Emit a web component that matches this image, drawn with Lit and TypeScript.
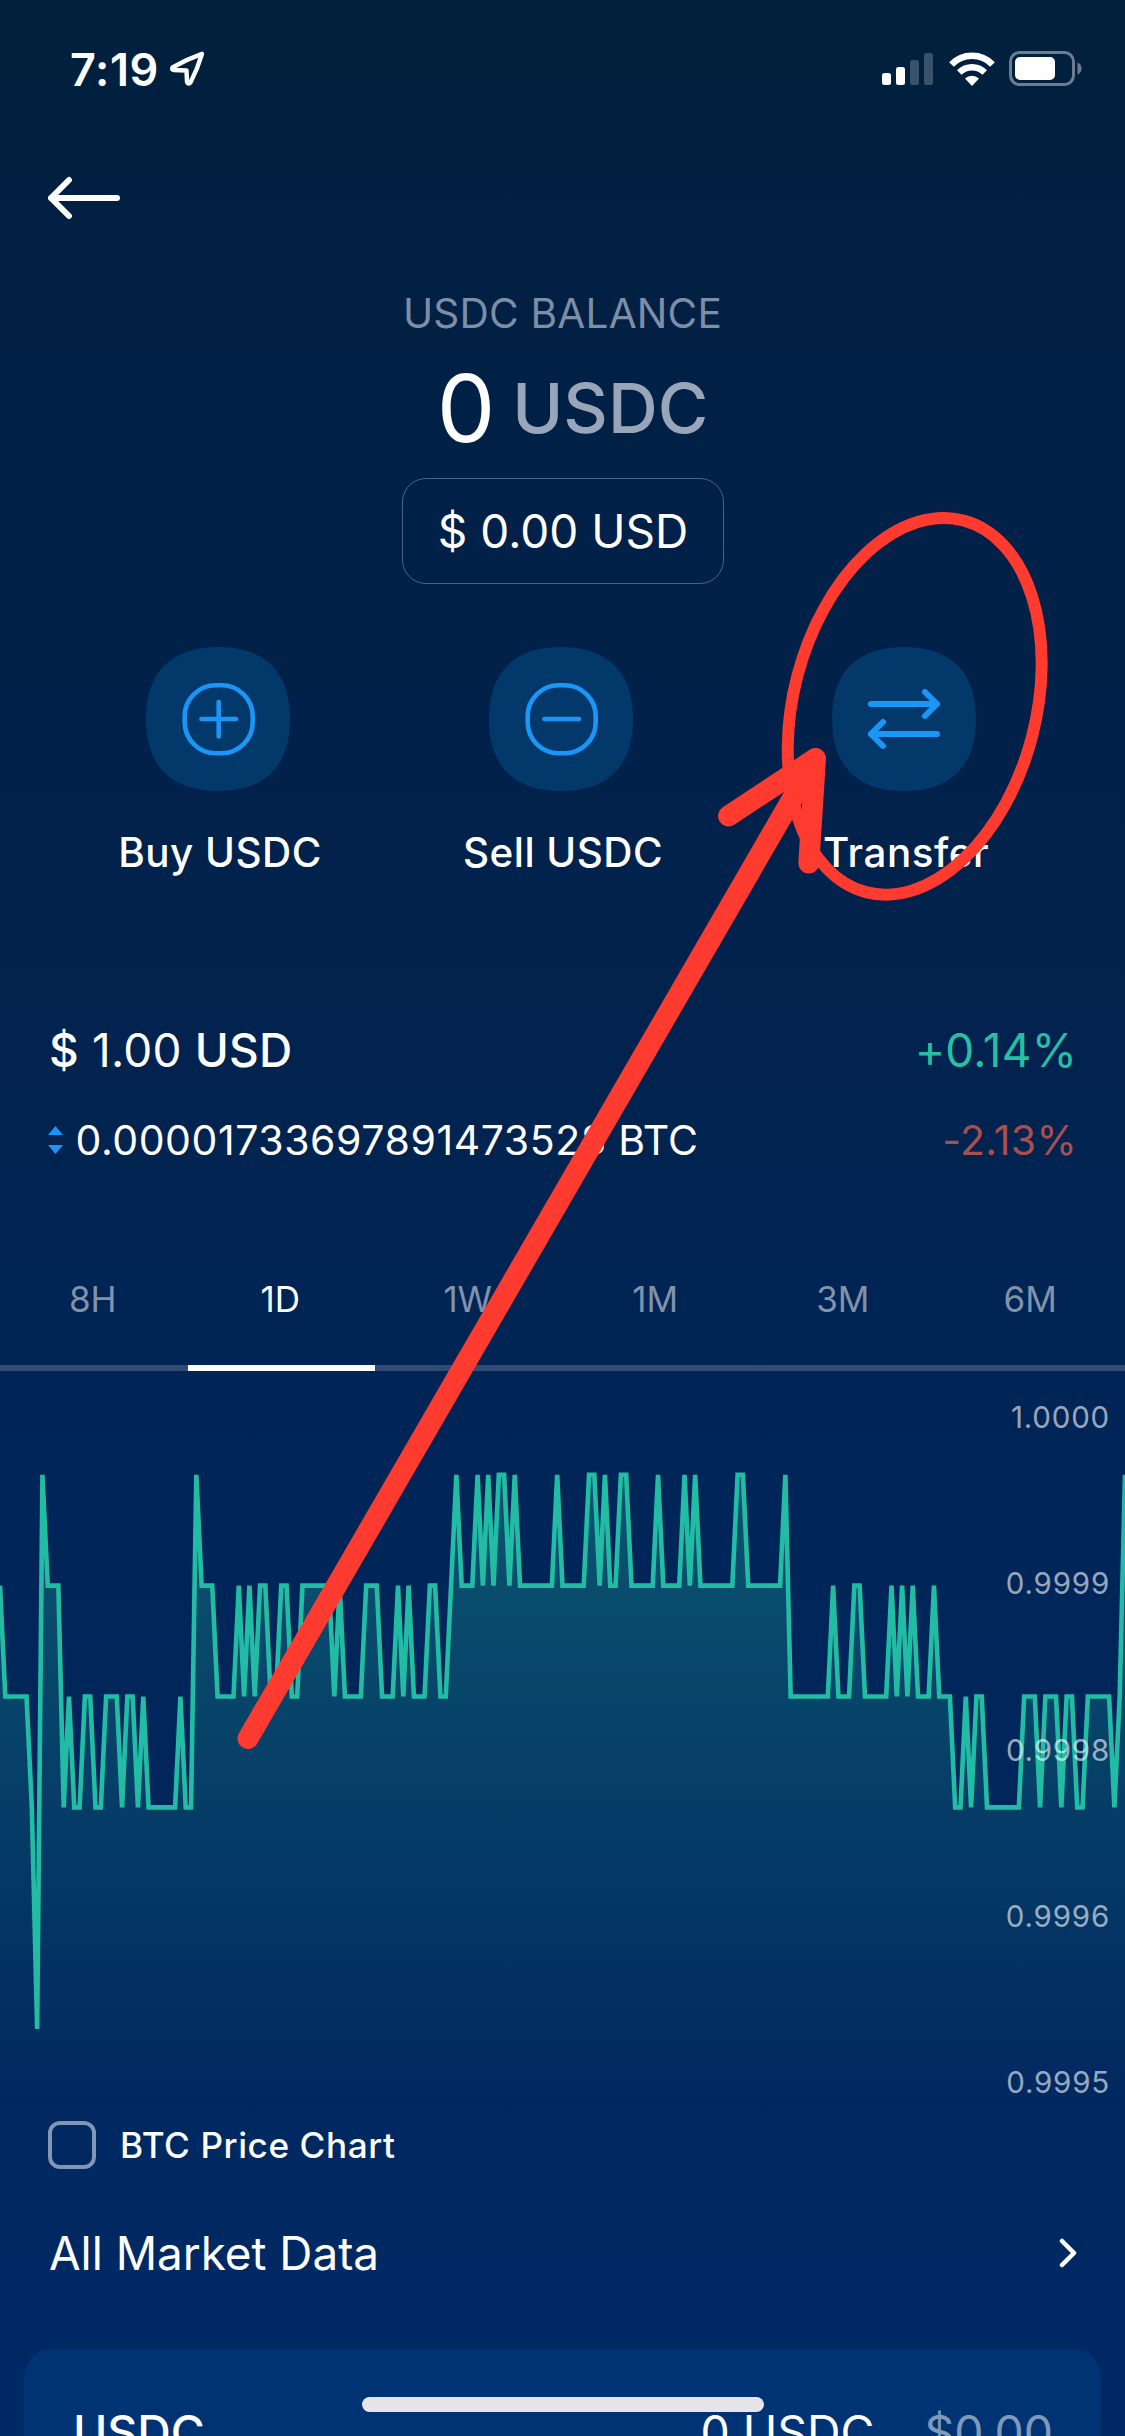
import { LitElement, html, svg, css } from "lit";
import { customElement } from "lit/decorators.js";

const WIDTH = 1125;

// Runs of [level, sample count]; one level is one price tick.
const RUNS: Array<[number, number]> = [
  [3, 1], [2, 5], [1, 1], [-1, 1], [4, 1], [3, 3], [1, 1], [2, 1], [1, 2], [2, 2], [1, 2], [2, 3], [1, 1],
  [2, 2], [1, 1], [2, 1], [1, 6], [2, 1], [1, 2], [4, 1], [3, 3], [2, 4], [3, 1], [2, 1], [3, 1], [2, 1],
  [3, 2], [2, 2], [3, 2], [2, 2], [3, 6], [2, 1], [3, 1], [2, 4], [3, 3], [2, 3], [3, 1], [2, 1], [3, 1],
  [2, 3], [3, 2], [2, 2], [3, 1], [4, 1], [3, 3], [4, 1], [3, 1], [4, 1], [3, 1], [4, 2], [3, 1], [4, 1],
  [3, 7], [4, 1], [3, 5], [4, 2], [3, 1], [4, 1], [3, 2], [4, 2], [3, 5], [4, 1], [3, 4], [4, 1], [3, 1],
  [4, 1], [3, 7], [4, 2], [3, 7], [4, 1], [2, 8], [3, 1], [2, 3], [3, 2], [2, 5], [3, 1], [2, 1], [3, 1],
  [2, 1], [3, 1], [2, 3], [3, 1], [2, 3], [1, 2], [2, 1], [1, 1], [2, 2], [1, 7], [2, 3], [1, 1], [2, 3],
  [1, 1], [2, 2], [1, 2], [2, 5], [1, 1], [2, 1], [4, 1],
];
const LEVELS = RUNS.flatMap(([level, count]) => Array<number>(count).fill(level));
const STEP = WIDTH / (LEVELS.length - 1);
const CHART_HEIGHT = 750;
const LINE = LEVELS.map((l, i) => `${(i * STEP).toFixed(2)},${(103.8 + (4 - l) * 110.85).toFixed(2)}`).join(" ");

@customElement("price-chart")
export class PriceChart extends LitElement {
  static styles = css`
    :host { display: block; position: relative; height: 750px; }
    .plot { display: block; }
    .axis { position: absolute; top: 21px; right: 15px; text-align: right; font-size: 29.5px; line-height: 50px; letter-spacing: 0.8px; color: rgba(255, 255, 255, 0.6); }
    .tick { height: 166.3px; }
  `;
  render() {
    return html`
      <svg class="plot" width=${WIDTH} height=${CHART_HEIGHT} viewBox="0 0 1125 750">
        <defs>
          <linearGradient id="area" gradientUnits="userSpaceOnUse" x1="0" y1="100" x2="0" y2="730">
            <stop offset="0" stop-color="#22bca4" stop-opacity=".32" />
            <stop offset="1" stop-color="#22bca4" stop-opacity="0" />
          </linearGradient>
        </defs>
        <polygon points="0,730 ${LINE} 1125,730" fill="url(#area)" />
        <polyline points=${LINE} fill="none" stroke="#22bca4" stroke-width="4.6" />
      </svg>
      <div class="axis">
        ${["1.0000", "0.9999", "0.9998", "0.9996", "0.9995"].map((t) => html`<div class="tick">${t}</div>`)}
      </div>
    `;
  }
}

const ICONS = {
  plus: svg`<rect x="38.700" y="38.200" width="68" height="68" rx="31" /><path d="M55.500 72H90M72.700 55V89.500" />`,
  minus: svg`<rect x="38.700" y="38.200" width="68" height="68" rx="31" /><path d="M55.500 72H90" />`,
  transfer: svg`<g stroke-width="6"><path d="M39 57H105M93 45L105 57L93 69M105 87H39M51 75L39 87L51 99" /></g>`,
};

@customElement("round-action")
export class RoundAction extends LitElement {
  static properties = { icon: {}, label: {} };
  declare icon: keyof typeof ICONS;
  declare label: string;
  static styles = css`
    :host { display: flex; flex-direction: column; align-items: center; gap: 37px; }
    .glyph { display: block; }
    .label { padding-left: 4px; font-size: 40.4px; font-weight: 500; line-height: 50px; letter-spacing: 0.5px; white-space: nowrap; }
  `;
  render() {
    return html`
      <svg class="glyph" width="144" height="144" viewBox="0 0 144 144" fill="none" stroke="#1a96f7" stroke-width="4.6" stroke-linecap="round" stroke-linejoin="round">
        <path stroke="none" fill="#03386a" d="M72 0C120 0 144 26 144 72S120 144 72 144S0 118 0 72S24 0 72 0Z" />
        ${ICONS[this.icon]}
      </svg>
      <span class="label">${this.label}</span>
    `;
  }
}

@customElement("app-root")
export class AppRoot extends LitElement {
  static styles = css`
    :host {
      display: block; position: relative; width: 1125px; height: 2436px; overflow: hidden; color: #fff;
      font-family: Inter, "Liberation Sans", sans-serif;
      background: linear-gradient(#01203d 0, #012046 400px, #01234f 1100px, #002558 1500px, #002962 2200px, #002a66 2436px);
    }
    svg { display: block; }
    .row { display: flex; align-items: center; justify-content: space-between; white-space: nowrap; }
    .status { height: 138px; padding: 0 43px 0 70px; }
    .time { display: flex; align-items: center; gap: 10px; font-size: 45px; font-weight: 600; letter-spacing: 0.6px; }
    .signals { display: flex; align-items: center; gap: 14.5px; }
    .nav { display: flex; align-items: center; height: 120px; padding-left: 48px; }
    .balance { display: flex; flex-direction: column; align-items: center; padding-top: 31px; white-space: nowrap; }
    .caption { font-size: 40.6px; line-height: 50px; letter-spacing: 0.2px; color: #7d8ea6; }
    .amount { display: flex; align-items: center; gap: 17px; height: 110px; margin-top: 14px; margin-left: 20px; }
    .number { font-size: 93px; }
    .unit { font-size: 69px; font-weight: 500; color: #99a6b9; }
    .fiat { box-sizing: border-box; width: 322px; height: 106px; margin-top: 15px; border: 1px solid #4a647e; border-radius: 24px; text-align: center; text-indent: 1px; font-size: 46px; line-height: 105px; }
    .actions { display: grid; grid-template-columns: repeat(3, 343px); margin: 63px 0 0 46.5px; }
    .price { height: 60px; margin-top: 142px; padding: 0 48px 0 49px; font-size: 46px; letter-spacing: 0.2px; }
    .strong { font-weight: 500; }
    .up { color: #26bfa3; }
    .rate { height: 50px; margin-top: 35px; padding: 0 48px; font-size: 41px; }
    .swap { display: flex; align-items: center; gap: 12.5px; }
    .digits { letter-spacing: 0.57px; }
    .down { letter-spacing: 0.3px; color: #a94f4e; }
    .tabs { display: grid; grid-template-columns: repeat(6, 1fr); margin-top: 69px; }
    .tab { box-sizing: border-box; height: 137px; padding-right: 2px; line-height: 131px; border-bottom: 6px solid #304c75; text-align: center; font-size: 35px; color: #8192ab; }
    .tab.active { color: #fff; border-color: #fff; }
    .option { height: 48px; justify-content: flex-start; gap: 24px; padding-left: 48px; font-size: 35.2px; font-weight: 500; letter-spacing: 0.55px; }
    .box { box-sizing: border-box; width: 48px; height: 48px; border: 4px solid #8195b5; border-radius: 12px; }
    .market { height: 60px; margin-top: 54px; padding: 0 48px 0 49px; font-size: 45.8px; }
    .card { box-sizing: border-box; height: 160px; margin: 66px 24px 0; padding: 53px 48px 0 49px; border-radius: 28px; background: #003373; font-size: 46.4px; line-height: 60px; align-items: flex-start; }
    .holdings { display: flex; gap: 50px; }
    .dim { color: #7f99bb; }
    .home { position: absolute; left: 362px; top: 2397px; width: 402px; height: 15px; border-radius: 8px; background: #e5e4e6; }
    .marks { position: absolute; left: 0; top: 0; }
  `;
  render() {
    return html`
      <div class="row status">
        <div class="time">
          <span class="clock">7:19</span>
          <svg width="36" height="36" viewBox="0 0 36 36" fill="none" stroke="#fff" stroke-width="4.4" stroke-linejoin="round"><path d="M33 2.800Q18 8 3.500 16.500Q2 18.500 5 19L17.500 19.500L18 31Q19.500 34 21.500 31.500Q28.500 18 33 2.800Z" /></svg>
        </div>
        <div class="signals">
          <svg width="52" height="34" viewBox="0 0 52 34" fill="#fff">
            <rect y="21" width="9" height="12" rx="2.500" /><rect x="14" y="15" width="9" height="18" rx="2.500" />
            <g opacity=".22"><rect x="28" y="8" width="9" height="25" rx="2.500" /><rect x="42" y="1" width="9" height="32" rx="2.500" /></g>
          </svg>
          <svg width="46" height="34" viewBox="0 0 46 34" fill="none" stroke="#fff" stroke-width="6.500">
            <path d="M2.500 12.500A28.500 28.500 0 0 1 43.500 12.500" /><path d="M10.300 20.500A18 18 0 0 1 35.700 20.500" />
            <path stroke="none" fill="#fff" d="M23 34L16 26.500A10 10 0 0 1 30 26.500Z" />
          </svg>
          <svg width="73" height="36" viewBox="0 0 73 36">
            <rect x="1.500" y="1.500" width="63" height="32" rx="9" fill="none" stroke="#6b7c93" stroke-width="3" />
            <rect x="6" y="6" width="40" height="23" rx="5" fill="#fff" /><path d="M68.500 11.500Q72.500 13 72.500 17.500T68.500 23.500Z" fill="#6b7c93" />
          </svg>
        </div>
      </div>
      <div class="nav">
        <svg width="72" height="44" viewBox="0 0 72 44" fill="none" stroke="#fff" stroke-width="6" stroke-linecap="round" stroke-linejoin="round"><path d="M69 22H3M21 4L3 22L21 40" /></svg>
      </div>
      <div class="balance">
        <span class="caption">USDC BALANCE</span>
        <div class="amount"><span class="number">0</span><span class="unit">USDC</span></div>
        <div class="fiat">$ 0.00 USD</div>
      </div>
      <div class="actions">
        <round-action icon="plus" label="Buy USDC"></round-action>
        <round-action icon="minus" label="Sell USDC"></round-action>
        <round-action icon="transfer" label="Transfer"></round-action>
      </div>
      <div class="row price">
        <span class="usd"><span class="strong">$</span> 1.00 <span class="strong">USD</span></span><span class="up">+0.14%</span>
      </div>
      <div class="row rate">
        <div class="swap">
          <svg width="15" height="28" viewBox="0 0 15 28" fill="#1a96f7"><path d="M7.500 0L15 9H0ZM7.500 28L15 19H0Z" /></svg>
          <span class="btc"><span class="digits">0.00001733697891473528</span> BTC</span>
        </div>
        <span class="down">-2.13%</span>
      </div>
      <div class="tabs">
        ${["8H", "1D", "1W", "1M", "3M", "6M"].map((t) => html`<div class="tab ${t === "1D" ? "active" : ""}">${t}</div>`)}
      </div>
      <price-chart></price-chart>
      <div class="row option"><span class="box"></span><span class="optlabel">BTC Price Chart</span></div>
      <div class="row market">
        <span class="all">All Market Data</span>
        <svg width="18" height="30" viewBox="0 0 18 30" fill="none" stroke="#fff" stroke-width="4.500" stroke-linecap="round" stroke-linejoin="round"><path d="M3 3L15 15L3 27" /></svg>
      </div>
      <div class="row card">
        <span class="strong">USDC</span>
        <div class="holdings"><span class="qty">0 USDC</span><span class="dim">$0.00</span></div>
      </div>
      <div class="home"></div>
      <svg class="marks" width="1125" height="2436" viewBox="0 0 1125 2436" fill="none" stroke="#ff3b2f" stroke-linecap="round" stroke-linejoin="round">
        <ellipse cx="914.700" cy="706.300" rx="121.200" ry="192.100" transform="rotate(14.700 914.700 706.300)" stroke-width="12" />
        <path d="M248 1738.500L815.500 758.500M728.500 816L815.500 758.500L808.800 863" stroke-width="21" />
      </svg>
    `;
  }
}
